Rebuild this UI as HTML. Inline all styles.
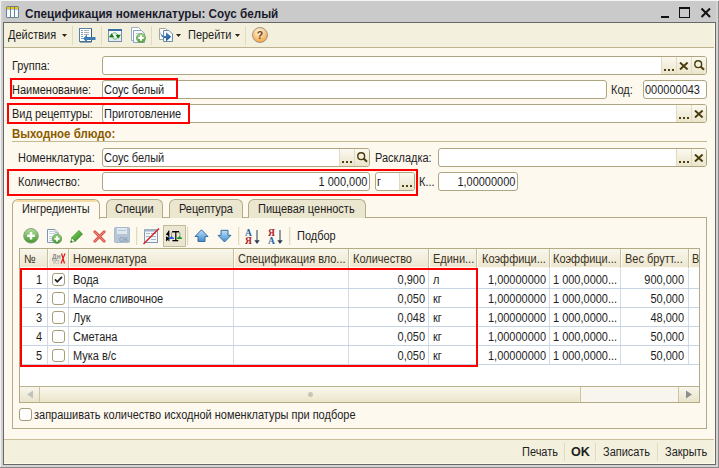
<!DOCTYPE html>
<html><head><meta charset="utf-8"><style>
*{margin:0;padding:0;box-sizing:border-box}
html,body{width:719px;height:468px;overflow:hidden}
body{position:relative;background:#cacaca;font-family:"Liberation Sans",sans-serif;font-size:11px;color:#1e1e1e}
.a{position:absolute}
.t{position:absolute;white-space:nowrap;line-height:13px;font-size:12px;transform:scaleX(0.915);transform-origin:0 0;margin-top:1px}
.tr{transform-origin:100% 0}
.fld{position:absolute;background:#fff;border:1px solid #aea581;border-radius:3px;overflow:hidden}
.btn{position:absolute;top:0;bottom:0;width:15px;background:linear-gradient(#fbf9f0,#ebe5cb);border-left:1px solid #e2dbc0}
.red{position:absolute;border:2px solid #ff0000}
.sep{position:absolute;width:2px;background:linear-gradient(90deg,#d6ceab,#fffdf6)}
</style></head><body>
<div class="a" style="left:0;top:0;width:719px;height:1px;background:#f4f4f4"></div>
<div class="a" style="left:0;top:0;width:1px;height:468px;background:#f0f0f0"></div>
<div class="a" style="left:718px;top:1px;width:1px;height:467px;background:#8a8a8a"></div>
<div class="a" style="left:0;top:467px;width:719px;height:1px;background:#8a8a8a"></div>
<div class="a" style="left:1px;top:465px;width:717px;height:2px;background:#d4d4d4"></div>
<div class="a" style="left:716px;top:1px;width:2px;height:466px;background:#d4d4d4"></div>
<div class="a" style="left:1px;top:1px;width:2px;height:466px;background:#d0d0d0"></div>
<div class="a" style="left:3px;top:22px;width:713px;height:443px;border:1px solid #686868;background:#fdf9ee"></div>
<div class="a" style="left:4px;top:23px;width:711px;height:24px;background:#f3f0dd"></div>
<div class="a" style="left:4px;top:47px;width:711px;height:1px;background:#bdb38e"></div>
<div class="a" style="left:4px;top:439px;width:711px;height:1px;background:#c9bf9b"></div>
<div class="a" style="left:4px;top:440px;width:711px;height:23px;background:#f3f0dd"></div>
<div class="a" style="left:4px;top:463px;width:711px;height:1px;background:#fffbe6"></div>
<div class="a" style="left:714px;top:23px;width:1px;height:441px;background:#fffbe6"></div>
<!-- title -->
<svg class="a" style="left:6px;top:6px" width="13" height="12" viewBox="0 0 13 12">
<rect x="0" y="0" width="13" height="12" rx="1.5" fill="#6d8193"/>
<rect x="1" y="1" width="3" height="2" fill="#f2c600"/><rect x="5" y="1" width="3" height="2" fill="#f2c600"/><rect x="9" y="1" width="3" height="2" fill="#f2c600"/>
<rect x="1" y="3" width="3" height="1" fill="#b6c8d6"/><rect x="5" y="3" width="3" height="1" fill="#b6c8d6"/><rect x="9" y="3" width="3" height="1" fill="#b6c8d6"/>
<rect x="1" y="4" width="3" height="7" fill="#f4fbff"/><rect x="5" y="4" width="3" height="7" fill="#f4fbff"/><rect x="9" y="4" width="3" height="7" fill="#f4fbff"/>
</svg>
<div class="t" style="left:25px;top:6px;font-weight:bold;font-size:13px;transform:scaleX(0.9);color:#1a1a2a">Спецификация номенклатуры: Соус белый</div>
<div class="a" style="left:661px;top:16px;width:8px;height:2px;background:#111"></div>
<div class="a" style="left:679px;top:7px;width:11px;height:11px;border:1px solid #111;border-top-width:2px"></div>
<svg class="a" style="left:700px;top:7px" width="12" height="11" viewBox="0 0 12 11"><path d="M1.5 1.5L10 10M10 1.5L1.5 10" stroke="#111" stroke-width="2"/></svg>
<!-- toolbar -->
<div class="t" style="left:8px;top:28px">Действия</div>
<svg class="a" style="left:62px;top:34px" width="6" height="3" viewBox="0 0 6 3"><path d="M0 0H5L2.5 3Z" fill="#2e2410"/></svg>
<div class="sep" style="left:72px;top:26px;height:19px"></div>
<svg class="a" style="left:79px;top:28px" width="17" height="15" viewBox="0 0 17 15">
<rect x="0.5" y="0.5" width="12" height="13" fill="#fff" stroke="#5a80a6"/>
<path d="M12.5 1V14H1" stroke="#3b5d7e" fill="none"/>
<g fill="#7aa0c8"><rect x="2" y="2" width="2" height="1"/><rect x="2" y="4" width="2" height="1"/><rect x="2" y="6" width="2" height="1"/><rect x="2" y="8" width="2" height="1"/><rect x="2" y="10" width="2" height="1"/></g>
<g fill="#b0b0b0"><rect x="5" y="2" width="5" height="1"/><rect x="5" y="4" width="5" height="1"/><rect x="5" y="6" width="5" height="1"/></g>
<path d="M4 10.5L8 6.5V9H16.5V12H8V14.5Z" fill="#3b7cb3"/>
</svg>
<div class="sep" style="left:101px;top:26px;height:19px"></div>
<svg class="a" style="left:108px;top:29px" width="14" height="13" viewBox="0 0 14 13">
<rect x="0.5" y="0.5" width="13" height="12" fill="#f7fbfe" stroke="#7b91a6"/>
<rect x="0" y="0" width="14" height="2" fill="#3c70a3"/>
<rect x="1" y="8" width="12" height="4" fill="#e2ebf3"/>
<path d="M3.6 5.5Q6.8 1.8 10 6M10 8.5Q6.8 12.2 3.6 8" stroke="#74b862" stroke-width="1" fill="none"/>
<path d="M0.8 8.2H6.4L3.6 4.2Z" fill="#1d7a12"/><path d="M7.4 5.8H13L10.2 9.8Z" fill="#1d7a12"/>
</svg>
<svg class="a" style="left:130px;top:26px" width="17" height="18" viewBox="0 0 17 18">
<path d="M1.5 1.5H8.5L10.5 3.5V14.5H1.5Z" fill="#fff" stroke="#9cb0c4"/>
<path d="M3.5 4.5H11.5L14.5 7.5V16.5H3.5Z" fill="#f8fbff" stroke="#8aa2ba"/>
<rect x="5.5" y="7" width="5" height="1" fill="#c3cdd8"/>
<defs><linearGradient id="g3" x1="0" y1="0" x2="0" y2="1"><stop offset="0" stop-color="#a6d98e"/><stop offset="1" stop-color="#4a9e32"/></linearGradient></defs><circle cx="11" cy="12" r="4.6" fill="url(#g3)" stroke="#789a6c" stroke-width="0.8"/>
<path d="M11 9.3V14.7M8.3 12H13.7" stroke="#fff" stroke-width="2"/>
</svg>
<div class="sep" style="left:151px;top:26px;height:19px"></div>
<svg class="a" style="left:158px;top:27px" width="16" height="16" viewBox="0 0 16 16">
<path d="M1.5 1.5H7.5L9 3V12.5H1.5Z" fill="#fff" stroke="#a7a49a"/>
<path d="M5.5 3.5H11L14.5 7V14.5H5.5Z" fill="#f7fbff" stroke="#6f8aa5"/>
<defs><linearGradient id="ar4" x1="0" y1="0" x2="1" y2="1"><stop offset="0" stop-color="#5aa0d8"/><stop offset="1" stop-color="#1d4f85"/></linearGradient></defs><path d="M2.5 3.5C2.5 7.5 4.5 9 8 9V5.2L13.2 9.8L8 14.5V11.3C4.5 11.3 1.8 9 2.5 3.5Z" fill="url(#ar4)"/>
</svg>
<svg class="a" style="left:176px;top:34px" width="6" height="3" viewBox="0 0 6 3"><path d="M0 0H5L2.5 3Z" fill="#2e2410"/></svg>
<div class="t" style="left:188px;top:28px">Перейти</div>
<svg class="a" style="left:235px;top:34px" width="6" height="3" viewBox="0 0 6 3"><path d="M0 0H5L2.5 3Z" fill="#2e2410"/></svg>
<div class="sep" style="left:245px;top:26px;height:19px"></div>
<svg class="a" style="left:251px;top:26px" width="18" height="18" viewBox="0 0 18 18">
<defs><radialGradient id="hg" cx="0.45" cy="0.3" r="0.7"><stop offset="0" stop-color="#fff6e4"/><stop offset="1" stop-color="#f3a53e"/></radialGradient></defs>
<circle cx="9" cy="9" r="7.5" fill="url(#hg)" stroke="#9a8f80" stroke-width="0.9"/>
<text x="9" y="13" text-anchor="middle" font-family="Liberation Sans" font-weight="bold" font-size="10.5" fill="#6e431e">?</text>
</svg>

<div class="t" style="left:12px;top:59px;">Группа:</div>
<div class="fld" style="left:102px;top:56px;width:605px;height:19px"><div class="btn" style="right:30px"><svg class="a" style="left:1px;top:12px" width="12" height="2" viewBox="0 0 12 2"><g fill="#4f4216"><rect x="1" y="0" width="2" height="2"/><rect x="5" y="0" width="2" height="2"/><rect x="9" y="0" width="2" height="2"/></g></svg></div><div class="btn" style="right:15px"><svg class="a" style="left:2px;top:5px" width="10" height="8" viewBox="0 0 10 8"><path d="M1 0.5L8.6 7.5M8.6 0.5L1 7.5" stroke="#4a3b0e" stroke-width="1.9"/></svg></div><div class="btn" style="right:0px"><svg class="a" style="left:1px;top:2px" width="13" height="12" viewBox="0 0 13 12"><circle cx="5.2" cy="5.2" r="3.4" fill="none" stroke="#4a3b0e" stroke-width="1.4"/><path d="M7.6 7.6L11 10.8" stroke="#4a3b0e" stroke-width="2"/></svg></div></div>
<div class="t" style="left:12px;top:83px;">Наименование:</div>
<div class="fld" style="left:102px;top:80px;width:505px;height:19px"><div class="t" style="left:1px;top:2px">Соус белый</div></div>
<div class="t" style="left:611px;top:83px;">Код:</div>
<div class="fld" style="left:643px;top:80px;width:64px;height:19px"><div class="t" style="left:1px;top:2px">000000043</div></div>
<div class="t" style="left:12px;top:107px;">Вид рецептуры:</div>
<div class="fld" style="left:102px;top:104px;width:605px;height:19px"><div class="btn" style="right:15px"><svg class="a" style="left:1px;top:12px" width="12" height="2" viewBox="0 0 12 2"><g fill="#4f4216"><rect x="1" y="0" width="2" height="2"/><rect x="5" y="0" width="2" height="2"/><rect x="9" y="0" width="2" height="2"/></g></svg></div><div class="btn" style="right:0px"><svg class="a" style="left:2px;top:5px" width="10" height="8" viewBox="0 0 10 8"><path d="M1 0.5L8.6 7.5M8.6 0.5L1 7.5" stroke="#4a3b0e" stroke-width="1.9"/></svg></div><div class="t" style="left:1px;top:2px">Приготовление</div></div>
<div class="t" style="left:12px;top:127px;font-weight:bold;font-size:12.5px;color:#8b5a00">Выходное блюдо:</div>
<div class="a" style="left:12px;top:141px;width:695px;height:1px;background:#c2b98f"></div>
<div class="t" style="left:18px;top:151px;">Номенклатура:</div>
<div class="fld" style="left:102px;top:148px;width:268px;height:19px"><div class="btn" style="right:15px"><svg class="a" style="left:1px;top:12px" width="12" height="2" viewBox="0 0 12 2"><g fill="#4f4216"><rect x="1" y="0" width="2" height="2"/><rect x="5" y="0" width="2" height="2"/><rect x="9" y="0" width="2" height="2"/></g></svg></div><div class="btn" style="right:0px"><svg class="a" style="left:1px;top:2px" width="13" height="12" viewBox="0 0 13 12"><circle cx="5.2" cy="5.2" r="3.4" fill="none" stroke="#4a3b0e" stroke-width="1.4"/><path d="M7.6 7.6L11 10.8" stroke="#4a3b0e" stroke-width="2"/></svg></div><div class="t" style="left:1px;top:2px">Соус белый</div></div>
<div class="t" style="left:375px;top:151px;">Раскладка:</div>
<div class="fld" style="left:438px;top:148px;width:269px;height:19px"><div class="btn" style="right:15px"><svg class="a" style="left:1px;top:12px" width="12" height="2" viewBox="0 0 12 2"><g fill="#4f4216"><rect x="1" y="0" width="2" height="2"/><rect x="5" y="0" width="2" height="2"/><rect x="9" y="0" width="2" height="2"/></g></svg></div><div class="btn" style="right:0px"><svg class="a" style="left:2px;top:5px" width="10" height="8" viewBox="0 0 10 8"><path d="M1 0.5L8.6 7.5M8.6 0.5L1 7.5" stroke="#4a3b0e" stroke-width="1.9"/></svg></div></div>
<div class="t" style="left:18px;top:175px;">Количество:</div>
<div class="fld" style="left:102px;top:172px;width:268px;height:19px"><div class="t tr" style="right:2px;top:2px">1 000,000</div></div>
<div class="fld" style="left:375px;top:172px;width:40px;height:19px"><div class="btn" style="right:0px"><svg class="a" style="left:1px;top:12px" width="12" height="2" viewBox="0 0 12 2"><g fill="#4f4216"><rect x="1" y="0" width="2" height="2"/><rect x="5" y="0" width="2" height="2"/><rect x="9" y="0" width="2" height="2"/></g></svg></div><div class="t" style="left:1px;top:2px">г</div></div>
<div class="t" style="left:419px;top:175px;">К...</div>
<div class="fld" style="left:438px;top:172px;width:80px;height:19px"><div class="t tr" style="right:2px;top:2px">1,00000000</div></div>
<div class="red" style="left:10px;top:78px;width:168px;height:21px"></div>
<div class="red" style="left:7px;top:103px;width:183px;height:21px"></div>
<div class="red" style="left:7px;top:169px;width:411px;height:27px"></div>
<div class="a" style="left:12px;top:217px;width:695px;height:212px;border:1px solid #b3aa86;background:#fdf9ee"></div>
<div class="a" style="left:106px;top:199px;width:57px;height:19px;border:1px solid #b3aa86;border-bottom:none;border-radius:6px 6px 0 0;background:#ebe6d0"></div>
<div class="t" style="left:115px;top:202px;">Специи</div>
<div class="a" style="left:169px;top:199px;width:74px;height:19px;border:1px solid #b3aa86;border-bottom:none;border-radius:6px 6px 0 0;background:#ebe6d0"></div>
<div class="t" style="left:179px;top:202px;">Рецептура</div>
<div class="a" style="left:248px;top:199px;width:118px;height:19px;border:1px solid #b3aa86;border-bottom:none;border-radius:6px 6px 0 0;background:#ebe6d0"></div>
<div class="t" style="left:258px;top:202px;">Пищевая ценность</div>
<div class="a" style="left:12px;top:199px;width:88px;height:20px;border:1px solid #b3aa86;border-bottom:none;border-radius:6px 6px 0 0;background:#fdf9ee"></div>
<div class="a" style="left:15px;top:200px;width:82px;height:2px;background:#f5dba4;border-radius:3px 3px 0 0"></div>
<div class="t" style="left:22px;top:202px;">Ингредиенты</div>
<svg class="a" style="left:22px;top:227px" width="18" height="18" viewBox="0 0 18 18">
<defs><linearGradient id="g1" x1="0" y1="0" x2="0" y2="1"><stop offset="0" stop-color="#b6e09e"/><stop offset="1" stop-color="#3f9429"/></linearGradient></defs>
<circle cx="9" cy="8.8" r="7.3" fill="url(#g1)" stroke="#7f9a78" stroke-width="0.9"/>
<path d="M9 5V12.6M5.2 8.8H12.8" stroke="#fff" stroke-width="2.5"/></svg>
<svg class="a" style="left:46px;top:228px" width="18" height="17" viewBox="0 0 18 17">
<path d="M1.5 1.5H9L12 4.5V14.5H1.5Z" fill="#fbfdff" stroke="#7d95ae"/>
<path d="M9 1.5V4.5H12" fill="#dfe7ef" stroke="#9fb2c5" stroke-width="0.8"/>
<g fill="#b9c7d5"><rect x="3" y="3" width="5" height="0.8"/><rect x="3" y="5" width="6" height="0.8"/><rect x="3" y="8" width="4" height="0.8"/><rect x="3" y="10" width="4" height="0.8"/><rect x="3" y="12" width="4" height="0.8"/></g>
<defs><linearGradient id="g2" x1="0" y1="0" x2="0" y2="1"><stop offset="0" stop-color="#9ed587"/><stop offset="1" stop-color="#3f9428"/></linearGradient></defs>
<circle cx="11" cy="10.8" r="4.7" fill="url(#g2)" stroke="#5f9250" stroke-width="0.7"/>
<path d="M11 8.2V13.4M8.4 10.8H13.6" stroke="#fff" stroke-width="1.9"/></svg>
<svg class="a" style="left:70px;top:229px" width="14" height="14" viewBox="0 0 14 14">
<defs><linearGradient id="pg" x1="0" y1="0" x2="1" y2="1"><stop offset="0" stop-color="#8ee06a"/><stop offset="1" stop-color="#22800f"/></linearGradient></defs>
<path d="M1.7 8.7L8.9 1.5L12.5 5.1L5.3 12.3Z" fill="url(#pg)" stroke="#2a7a18" stroke-width="0.7"/>
<path d="M1.7 8.7L5.3 12.3L0.6 13.4Z" fill="#f4f7ee" stroke="#2a7a18" stroke-width="0.6"/>
<path d="M0.4 13.6L1.2 11.4L2.6 12.8Z" fill="#1d5e10"/></svg>
<svg class="a" style="left:93px;top:230px" width="13" height="13" viewBox="0 0 13 13">
<path d="M1.8 1.8L11.2 11.2M11.2 1.8L1.8 11.2" stroke="#d9544a" stroke-width="2.8" stroke-linecap="round"/>
<path d="M1.8 1.8L11.2 11.2M11.2 1.8L1.8 11.2" stroke="#f08a7e" stroke-width="1" stroke-linecap="round"/></svg>
<svg class="a" style="left:114px;top:227px" width="17" height="17" viewBox="0 0 17 17">
<rect x="0.5" y="0.5" width="15" height="15" rx="1" fill="#b6c6d6" stroke="#a9bacb"/>
<rect x="3" y="1" width="10" height="6" fill="#dfe8ef"/>
<rect x="4" y="3" width="8" height="1" fill="#b6c6d6"/>
<text x="5" y="15" font-family="Liberation Sans" font-weight="bold" font-size="6.5" fill="#8fa3b8">OK</text></svg>
<div class="sep" style="left:136px;top:227px;height:18px"></div>
<svg class="a" style="left:143px;top:228px" width="17" height="17" viewBox="0 0 17 17">
<rect x="1.5" y="1.5" width="13" height="13" fill="#f3f7fb" stroke="#8399ae"/>
<rect x="1" y="1" width="14" height="2.5" fill="#9fb3c6"/>
<g fill="#a5b5c5"><rect x="3" y="5" width="4" height="1"/><rect x="8" y="5" width="5" height="1"/><rect x="3" y="8" width="4" height="1"/><rect x="8" y="8" width="5" height="1"/><rect x="8" y="11" width="5" height="1"/></g>
<path d="M0.5 16L16 0.5" stroke="#d52020" stroke-width="1.4"/></svg>
<div class="a" style="left:163px;top:225px;width:23px;height:22px;border:1px solid #c3ba96;background:#ebe6d1"></div>
<svg class="a" style="left:165px;top:229px" width="20" height="15" viewBox="0 0 20 15">
<path d="M4 1.6L0.8 5.6L4 7Z" fill="#000"/><path d="M1 7.2L1 12.6L4.6 9.6Z" fill="#000"/><rect x="3.4" y="1.6" width="1" height="10.5" fill="#000"/>
<path d="M6.6 8.5V4.5Q6.6 2.5 8.5 2.5H13Q14.9 2.5 14.9 4.5V8.5" stroke="#8a8a8a" stroke-width="0.9" fill="none"/>
<rect x="7.2" y="2" width="6.8" height="1.4" fill="#000"/><rect x="10.2" y="2.5" width="1.2" height="9" fill="#000"/><rect x="7.4" y="11" width="5.8" height="1.3" fill="#000"/>
<path d="M4 9.5L6.5 7L9 9.5Z" fill="#2a5cf0"/><rect x="4" y="8.6" width="5" height="1.4" fill="#2a5cf0"/>
<path d="M12 9.5L14.5 7L17 9.5Z" fill="#1d9a2a"/><rect x="12" y="8.6" width="5" height="1.4" fill="#1d9a2a"/></svg>
<div class="sep" style="left:187px;top:227px;height:18px"></div>
<svg class="a" style="left:194px;top:229px" width="15" height="14" viewBox="0 0 15 14">
<defs><linearGradient id="ga" x1="0" y1="0" x2="0" y2="1"><stop offset="0" stop-color="#bfe3fb"/><stop offset="1" stop-color="#3f8bd0"/></linearGradient></defs>
<path d="M7.5 0.8L14 7.5H11V12.5H4V7.5H1Z" fill="url(#ga)" stroke="#3a6d9c" stroke-width="1" stroke-linejoin="round"/></svg>
<svg class="a" style="left:217px;top:229px" width="15" height="14" viewBox="0 0 15 14">
<path d="M4 1.3H11V6.3H14L7.5 13L1 6.3H4Z" fill="url(#ga)" stroke="#3a6d9c" stroke-width="1" stroke-linejoin="round"/></svg>
<div class="sep" style="left:238px;top:227px;height:18px"></div>
<svg class="a" style="left:245px;top:227px" width="16" height="18" viewBox="0 0 16 18">
<text x="0" y="9" font-family="Liberation Serif" font-weight="bold" font-size="9.5" fill="#2a64a4">A</text>
<text x="0" y="17" font-family="Liberation Serif" font-weight="bold" font-size="9.5" fill="#b0202a">Я</text>
<rect x="11.5" y="3" width="1" height="11" fill="#2b3f55"/><path d="M9.3 13.3H14.7L12 17Z" fill="#2b3f55"/></svg>
<svg class="a" style="left:268px;top:227px" width="16" height="18" viewBox="0 0 16 18">
<text x="0" y="9" font-family="Liberation Serif" font-weight="bold" font-size="9.5" fill="#b0202a">Я</text>
<text x="0" y="17" font-family="Liberation Serif" font-weight="bold" font-size="9.5" fill="#2a64a4">A</text>
<rect x="11.5" y="3" width="1" height="11" fill="#2b3f55"/><path d="M9.3 13.3H14.7L12 17Z" fill="#2b3f55"/></svg>
<div class="sep" style="left:289px;top:227px;height:18px"></div>
<div class="t" style="left:297px;top:229px;">Подбор</div>
<div class="a" style="left:19px;top:248px;width:681px;height:155px;border:1px solid #b3aa86;background:#fff"></div>
<div class="a" style="left:20px;top:249px;width:679px;height:19px;background:linear-gradient(#f9f7ec,#ece6cf)"></div>
<div class="a" style="left:20px;top:267px;width:679px;height:1px;background:#fdfbf2"></div>
<div class="a" style="left:47px;top:249px;width:1px;height:19px;background:#c8bf9c"></div>
<div class="a" style="left:48px;top:249px;width:1px;height:19px;background:#fffdf5"></div>
<div class="a" style="left:47px;top:269px;width:1px;height:96px;background:#d3dbe4"></div>
<div class="a" style="left:68px;top:249px;width:1px;height:19px;background:#c8bf9c"></div>
<div class="a" style="left:69px;top:249px;width:1px;height:19px;background:#fffdf5"></div>
<div class="a" style="left:68px;top:269px;width:1px;height:96px;background:#d3dbe4"></div>
<div class="a" style="left:233px;top:249px;width:1px;height:19px;background:#c8bf9c"></div>
<div class="a" style="left:234px;top:249px;width:1px;height:19px;background:#fffdf5"></div>
<div class="a" style="left:233px;top:269px;width:1px;height:96px;background:#d3dbe4"></div>
<div class="a" style="left:348px;top:249px;width:1px;height:19px;background:#c8bf9c"></div>
<div class="a" style="left:349px;top:249px;width:1px;height:19px;background:#fffdf5"></div>
<div class="a" style="left:348px;top:269px;width:1px;height:96px;background:#d3dbe4"></div>
<div class="a" style="left:428px;top:249px;width:1px;height:19px;background:#c8bf9c"></div>
<div class="a" style="left:429px;top:249px;width:1px;height:19px;background:#fffdf5"></div>
<div class="a" style="left:428px;top:269px;width:1px;height:96px;background:#d3dbe4"></div>
<div class="a" style="left:476px;top:249px;width:1px;height:19px;background:#c8bf9c"></div>
<div class="a" style="left:477px;top:249px;width:1px;height:19px;background:#fffdf5"></div>
<div class="a" style="left:476px;top:269px;width:1px;height:96px;background:#d3dbe4"></div>
<div class="a" style="left:549px;top:249px;width:1px;height:19px;background:#c8bf9c"></div>
<div class="a" style="left:550px;top:249px;width:1px;height:19px;background:#fffdf5"></div>
<div class="a" style="left:549px;top:269px;width:1px;height:96px;background:#d3dbe4"></div>
<div class="a" style="left:620px;top:249px;width:1px;height:19px;background:#c8bf9c"></div>
<div class="a" style="left:621px;top:249px;width:1px;height:19px;background:#fffdf5"></div>
<div class="a" style="left:620px;top:269px;width:1px;height:96px;background:#d3dbe4"></div>
<div class="a" style="left:688px;top:249px;width:1px;height:19px;background:#c8bf9c"></div>
<div class="a" style="left:689px;top:249px;width:1px;height:19px;background:#fffdf5"></div>
<div class="a" style="left:688px;top:269px;width:1px;height:96px;background:#d3dbe4"></div>
<div class="a" style="left:20px;top:288px;width:679px;height:1px;background:#c6d5e6"></div>
<div class="a" style="left:20px;top:307px;width:679px;height:1px;background:#c6d5e6"></div>
<div class="a" style="left:20px;top:326px;width:679px;height:1px;background:#c6d5e6"></div>
<div class="a" style="left:20px;top:345px;width:679px;height:1px;background:#c6d5e6"></div>
<div class="a" style="left:20px;top:364px;width:679px;height:1px;background:#c6d5e6"></div>
<div class="t" style="left:24px;top:252px;color:#3a311c">№</div>
<div class="t" style="left:73px;top:252px;color:#3a311c">Номенклатура</div>
<div class="t" style="left:238px;top:252px;color:#3a311c">Спецификация вло...</div>
<div class="t" style="left:353px;top:252px;color:#3a311c">Количество</div>
<div class="t" style="left:433px;top:252px;color:#3a311c">Едини...</div>
<div class="t" style="left:482px;top:252px;color:#3a311c">Коэффици...</div>
<div class="t" style="left:553px;top:252px;color:#3a311c">Коэффици...</div>
<div class="t" style="left:625px;top:252px;color:#3a311c">Вес брутт...</div>
<div class="t" style="left:692px;top:252px;color:#3a311c">В</div>
<svg class="a" style="left:52px;top:252px" width="15" height="13" viewBox="0 0 15 13">
<text x="0" y="6.5" font-family="Liberation Sans" font-weight="bold" font-size="6.5" fill="#8a8a8a">Дн</text>
<text x="1" y="12" font-family="Liberation Sans" font-size="6.5" fill="#a8a8a8">Кт</text>
<path d="M9.5 1.5L12.5 11.5M13 1.5L9 11.5" stroke="#e01818" stroke-width="1.2"/></svg>
<div class="t tr" style="left:20px;width:22px;text-align:right;top:273px">1</div>
<div class="a" style="left:52px;top:273px;width:13px;height:13px;border:1px solid #a59c78;border-radius:3px;background:#fff"></div>
<svg class="a" style="left:52px;top:273px" width="13" height="13" viewBox="0 0 13 13"><path d="M3 6.3L5.3 8.8L10 3.8" stroke="#222" stroke-width="1.8" fill="none"/></svg>
<div class="t" style="left:73px;top:273px;">Вода</div>
<div class="t tr" style="left:349px;width:76px;text-align:right;top:273px">0,900</div>
<div class="t" style="left:433px;top:273px;">л</div>
<div class="t tr" style="left:477px;width:69px;text-align:right;top:273px">1,00000000</div>
<div class="t" style="left:553px;top:273px;">1 000,0000...</div>
<div class="t tr" style="left:621px;width:63px;text-align:right;top:273px">900,000</div>
<div class="t tr" style="left:20px;width:22px;text-align:right;top:292px">2</div>
<div class="a" style="left:52px;top:292px;width:13px;height:13px;border:1px solid #a59c78;border-radius:3px;background:#fff"></div>
<div class="t" style="left:73px;top:292px;">Масло сливочное</div>
<div class="t tr" style="left:349px;width:76px;text-align:right;top:292px">0,050</div>
<div class="t" style="left:433px;top:292px;">кг</div>
<div class="t tr" style="left:477px;width:69px;text-align:right;top:292px">1,00000000</div>
<div class="t" style="left:553px;top:292px;">1 000,0000...</div>
<div class="t tr" style="left:621px;width:63px;text-align:right;top:292px">50,000</div>
<div class="t tr" style="left:20px;width:22px;text-align:right;top:311px">3</div>
<div class="a" style="left:52px;top:311px;width:13px;height:13px;border:1px solid #a59c78;border-radius:3px;background:#fff"></div>
<div class="t" style="left:73px;top:311px;">Лук</div>
<div class="t tr" style="left:349px;width:76px;text-align:right;top:311px">0,048</div>
<div class="t" style="left:433px;top:311px;">кг</div>
<div class="t tr" style="left:477px;width:69px;text-align:right;top:311px">1,00000000</div>
<div class="t" style="left:553px;top:311px;">1 000,0000...</div>
<div class="t tr" style="left:621px;width:63px;text-align:right;top:311px">48,000</div>
<div class="t tr" style="left:20px;width:22px;text-align:right;top:330px">4</div>
<div class="a" style="left:52px;top:330px;width:13px;height:13px;border:1px solid #a59c78;border-radius:3px;background:#fff"></div>
<div class="t" style="left:73px;top:330px;">Сметана</div>
<div class="t tr" style="left:349px;width:76px;text-align:right;top:330px">0,050</div>
<div class="t" style="left:433px;top:330px;">кг</div>
<div class="t tr" style="left:477px;width:69px;text-align:right;top:330px">1,00000000</div>
<div class="t" style="left:553px;top:330px;">1 000,0000...</div>
<div class="t tr" style="left:621px;width:63px;text-align:right;top:330px">50,000</div>
<div class="t tr" style="left:20px;width:22px;text-align:right;top:349px">5</div>
<div class="a" style="left:52px;top:349px;width:13px;height:13px;border:1px solid #a59c78;border-radius:3px;background:#fff"></div>
<div class="t" style="left:73px;top:349px;">Мука в/с</div>
<div class="t tr" style="left:349px;width:76px;text-align:right;top:349px">0,050</div>
<div class="t" style="left:433px;top:349px;">кг</div>
<div class="t tr" style="left:477px;width:69px;text-align:right;top:349px">1,00000000</div>
<div class="t" style="left:553px;top:349px;">1 000,0000...</div>
<div class="t tr" style="left:621px;width:63px;text-align:right;top:349px">50,000</div>
<div class="red" style="left:20px;top:268px;width:458px;height:99px"></div>
<div class="a" style="left:20px;top:386px;width:679px;height:1px;background:#b9b08c"></div>
<div class="a" style="left:20px;top:387px;width:679px;height:15px;background:#f7f5ee"></div>
<div class="a" style="left:20px;top:387px;width:20px;height:15px;background:linear-gradient(#f8f6ec,#e9e3cb);border-right:1px solid #cdc4a2"></div>
<svg class="a" style="left:26px;top:390px" width="8" height="9" viewBox="0 0 8 9"><path d="M1 4.5L7 0.5V8.5Z" fill="#c2c2bc"/></svg>
<div class="a" style="left:40px;top:387px;width:541px;height:15px;background:linear-gradient(#faf8ee,#ebe5c9);border-right:1px solid #cdc4a2"></div>
<div class="a" style="left:308px;top:392px;width:5px;height:5px;border-radius:50%;background:#c9c5b6"></div>
<div class="a" style="left:678px;top:387px;width:21px;height:15px;background:linear-gradient(#f8f6ec,#e9e3cb);border-left:1px solid #cdc4a2"></div>
<svg class="a" style="left:685px;top:390px" width="8" height="9" viewBox="0 0 8 9"><path d="M7 4.5L1 0.5V8.5Z" fill="#8e8e8e"/></svg>
<div class="a" style="left:19px;top:408px;width:13px;height:13px;border:1px solid #a59c78;border-radius:3px;background:#fff"></div>
<div class="t" style="left:34px;top:408px;">запрашивать количество исходной номенклатуры при подборе</div>
<div class="sep" style="left:564px;top:443px;height:18px"></div>
<div class="sep" style="left:595px;top:443px;height:18px"></div>
<div class="sep" style="left:657px;top:443px;height:18px"></div>
<div class="t" style="left:522px;top:445px;">Печать</div>
<div class="t" style="left:571px;top:445px;font-weight:bold;font-size:12.6px;transform:none">OK</div>
<div class="t" style="left:603px;top:445px;">Записать</div>
<div class="t" style="left:665px;top:445px;">Закрыть</div>
</body></html>
